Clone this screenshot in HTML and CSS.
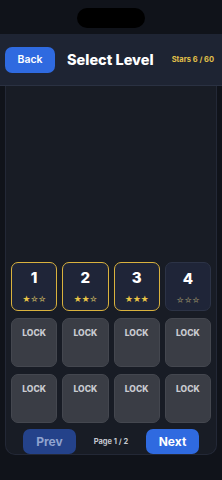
FILE: index.html
```html
<!DOCTYPE html>
<html lang="en">
<head>
    <meta charset="UTF-8">
    <meta name="viewport" content="width=device-width, initial-scale=1.0">
    <title>Select Level</title>
    <link rel="stylesheet" href="styles.css">
</head>
<body>
    <div class="notch"></div>

    <header class="topbar">
        <button class="btn btn-back">Back</button>
        <h1>Select Level</h1>
        <span class="stars-total">Stars 6 / 60</span>
    </header>

    <main class="panel">
        <div class="grid">
            <div class="tile done">
                <span class="num">1</span>
                <span class="stars"><b>★</b>☆☆</span>
            </div>
            <div class="tile done">
                <span class="num">2</span>
                <span class="stars"><b>★★</b>☆</span>
            </div>
            <div class="tile done">
                <span class="num">3</span>
                <span class="stars"><b>★★★</b></span>
            </div>
            <div class="tile open">
                <span class="num">4</span>
                <span class="stars dim">☆☆☆</span>
            </div>

            <div class="tile locked">LOCK</div>
            <div class="tile locked">LOCK</div>
            <div class="tile locked">LOCK</div>
            <div class="tile locked">LOCK</div>
            <div class="tile locked">LOCK</div>
            <div class="tile locked">LOCK</div>
            <div class="tile locked">LOCK</div>
            <div class="tile locked">LOCK</div>
        </div>

        <div class="pager">
            <button class="btn btn-page disabled">Prev</button>
            <span class="page-info">Page 1 / 2</span>
            <button class="btn btn-page">Next</button>
        </div>
    </main>
</body>
</html>
```

FILE: styles.css
```css
* {
    margin: 0;
    padding: 0;
    box-sizing: border-box;
}

body {
    font-family: 'Inter', 'Noto Sans', sans-serif;
    background-color: #10131a;
    color: #fff;
    width: 222px;
    height: 480px;
    overflow: hidden;
}

.notch {
    width: 68px;
    height: 20px;
    margin: 8px auto 0;
    background: #000;
    border-radius: 10px;
}

.topbar {
    margin-top: 6px;
    height: 52px;
    background-color: #1e2433;
    display: flex;
    align-items: center;
    padding: 0 8px 0 5px;
    border-bottom: 1px solid #2a3142;
}

.topbar h1 {
    font-size: 14.5px;
    font-weight: 800;
    margin-left: 12px;
    flex: 1;
}

.stars-total {
    font-size: 7.5px;
    font-weight: 700;
    color: #e3c14a;
}

.btn {
    border: none;
    font-family: inherit;
    color: #fff;
    background-color: #2f6ae0;
    cursor: pointer;
}

.btn-back {
    width: 50px;
    height: 26px;
    border-radius: 7px;
    font-size: 10.5px;
    font-weight: 600;
}

.panel {
    margin: 0 5px;
    height: 369px;
    background-color: #181c25;
    border: 1px solid #232836;
    border-top: none;
    border-radius: 0 0 10px 10px;
    display: flex;
    flex-direction: column;
    justify-content: flex-end;
    padding: 0 5px;
}

.grid {
    display: grid;
    grid-template-columns: repeat(4, 1fr);
    grid-auto-rows: 49px;
    column-gap: 5px;
    row-gap: 7px;
}

.tile {
    border-radius: 7px;
    display: flex;
    flex-direction: column;
    align-items: center;
}

.tile .num {
    font-size: 15px;
    font-weight: 800;
    margin-top: 6px;
    line-height: 18px;
}

.tile .stars {
    font-size: 8px;
    margin-top: 7px;
    color: #b9a55e;
    letter-spacing: -0.5px;
}

.tile .stars b {
    font-weight: normal;
    color: #eac646;
}

.tile .stars.dim {
    color: #7f7a5f;
}

.tile.done {
    background-color: #1f2538;
    border: 1.5px solid #d9b23e;
}

.tile.open {
    background-color: #1f2538;
    border: 1px solid #2c3346;
}

.tile.open .num {
    margin-top: 6.5px;
}

.tile.locked {
    background-color: #3a3d45;
    border: 1px solid #44474f;
    color: #c9cbd1;
    font-size: 8.5px;
    font-weight: 800;
    padding-top: 9px;
}

.pager {
    display: flex;
    justify-content: space-between;
    align-items: center;
    padding: 0 12px;
    margin-top: 6px;
}

.btn-page {
    width: 53px;
    height: 25px;
    border-radius: 7px;
    font-size: 12px;
    font-weight: 700;
}

.btn-page.disabled {
    background-color: #24428a;
    color: #8fa3cf;
}

.page-info {
    font-size: 7.5px;
    font-weight: 700;
    color: #c4c8d0;
}
```
